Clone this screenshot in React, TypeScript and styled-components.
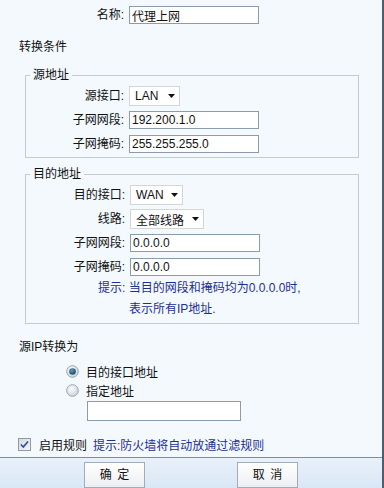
import React from "react";
import styled, { createGlobalStyle } from "styled-components";

const Global = createGlobalStyle`
  html, body { margin: 0; padding: 0; background: #f4f9fe; }
  body { font-family: "Liberation Sans", "Noto Sans CJK SC", sans-serif; font-size: 12px; color: #111; }
  * { box-sizing: border-box; }
`;

const Page = styled.div`
  width: 384px;
  height: 488px;
  overflow: hidden;
  background: #f4f9fe;
  border-right: 2px solid #4e5e6e;
  display: flex;
  flex-direction: column;
`;

const Row = styled.div<{ $mt?: number }>`
  display: flex;
  align-items: center;
  height: 20px;
  margin-top: ${(p) => p.$mt ?? 0}px;
`;

const Label = styled.span<{ $w: number; $gap?: number }>`
  width: ${(p) => p.$w}px;
  margin-right: ${(p) => p.$gap ?? 5}px;
  text-align: right;
  white-space: nowrap;
  line-height: 20px;
`;

const TextInput = styled.input<{ $w?: number; $h?: number }>`
  width: ${(p) => p.$w ?? 130}px;
  height: ${(p) => p.$h ?? 18}px;
  border: 1px solid #8d9cad;
  background: #fff;
  padding: 0 2px;
  margin: 0;
  font-family: "Liberation Sans", "Noto Sans CJK SC", sans-serif;
  font-size: 12px;
  color: #111;
  outline: none;
`;

const SelectBox = styled.div<{ $w: number }>`
  width: ${(p) => p.$w}px;
  height: 20px;
  border: 1px solid #d2d6da;
  background: #fff;
  display: flex;
  align-items: center;
  justify-content: space-between;
  padding: 0 4px 0 5px;
  font-size: 12px;
  color: #111;
`;

const Arrow = styled.svg`
  width: 7px;
  height: 4px;
  flex: none;
`;

const SectionTitle = styled.div<{ $mt: number }>`
  margin-top: ${(p) => p.$mt}px;
  height: 20px;
  line-height: 20px;
  padding-left: 19px;
`;

const Group = styled.fieldset<{ $mt: number }>`
  margin: ${(p) => p.$mt}px 0 0 25px;
  width: 334px;
  padding: 0 0 3px 0;
  border: 1px solid #c3ccd4;
  min-inline-size: 0;
`;

const Legend = styled.legend`
  margin-left: 4px;
  padding: 0 3px;
  height: 16px;
  line-height: 16px;
  font-size: 12px;
`;

const Rows = styled.div<{ $mt: number }>`
  display: flex;
  flex-direction: column;
  gap: 4px;
  margin-top: ${(p) => p.$mt}px;
`;

const Hint = styled.div`
  display: flex;
  flex-direction: column;
  color: #1c2f94;
  margin-top: 1px;
`;

const HintLine = styled.div<{ $indent: number }>`
  height: 21px;
  line-height: 21px;
  padding-left: ${(p) => p.$indent}px;
  white-space: nowrap;
`;

const RadioRow = styled.label<{ $mt?: number }>`
  display: flex;
  align-items: center;
  height: 19px;
  padding-left: 66px;
  margin-top: ${(p) => p.$mt ?? 0}px;
  gap: 7px;
`;

const IndentInput = styled.div`
  padding-left: 87px;
  margin-top: 1px;
  display: flex;
`;

const CheckRow = styled.div`
  display: flex;
  align-items: center;
  height: 20px;
  margin-top: 13px;
  padding-left: 18px;
`;

const BlueNote = styled.span`
  color: #1c2f94;
  margin-left: 6px;
`;

const Footer = styled.div`
  margin-top: 3px;
  flex: 1;
  border-top: 1px solid #7f8c99;
  background: linear-gradient(#e9f1fa, #d9e7f5);
  display: flex;
  padding: 4px 0 0 84px;
  gap: 92px;
`;

const Button = styled.button`
  width: 61px;
  height: 26px;
  margin: 0;
  padding: 0 0 3px 0;
  border: 1px solid #a3acb6;
  background: linear-gradient(#ffffff, #eceff2);
  font-family: "Liberation Sans", "Noto Sans CJK SC", sans-serif;
  font-size: 12px;
  color: #111;
  letter-spacing: 0;
  word-spacing: 2px;
`;

const Select = ({ value, w }: { value: string; w: number }) => (
  <SelectBox $w={w}>
    <span>{value}</span>
    <Arrow viewBox="0 0 7 4">
      <path d="M0 0 H7 L3.5 4 Z" fill="#111" />
    </Arrow>
  </SelectBox>
);

const Radio = ({ checked }: { checked?: boolean }) => (
  <svg width="13" height="13" viewBox="0 0 13 13">
    <defs>
      <radialGradient id={checked ? "rg1" : "rg0"} cx="0.4" cy="0.35" r="0.7">
        <stop offset="0" stopColor="#ffffff" />
        <stop offset="1" stopColor="#c9d0d6" />
      </radialGradient>
      <radialGradient id="dot" cx="0.4" cy="0.35" r="0.7">
        <stop offset="0" stopColor="#5f9ac0" />
        <stop offset="1" stopColor="#163f5e" />
      </radialGradient>
    </defs>
    <circle cx="6.5" cy="6.5" r="5.8" fill={`url(#${checked ? "rg1" : "rg0"})`} stroke="#9aa5af" strokeWidth="1" />
    {checked && <circle cx="6.5" cy="6.5" r="3.3" fill="url(#dot)" />}
  </svg>
);

const Checkbox = () => (
  <svg width="13" height="13" viewBox="0 0 13 13">
    <defs>
      <linearGradient id="cb" x1="0" y1="0" x2="1" y2="1">
        <stop offset="0" stopColor="#d4d9de" />
        <stop offset="1" stopColor="#f4f6f8" />
      </linearGradient>
    </defs>
    <rect x="0.5" y="0.5" width="12" height="12" fill="url(#cb)" stroke="#8e9aa6" />
    <path d="M3 6.5 L5.3 9 L10 3.5" fill="none" stroke="#2b4c9a" strokeWidth="1.6" />
  </svg>
);

export default function App() {
  return (
    <>
      <Global />
      <Page>
        <Row $mt={5}>
          <Label $w={124}>名称:</Label>
          <TextInput defaultValue="代理上网" />
        </Row>

        <SectionTitle $mt={12}>转换条件</SectionTitle>

        <Group $mt={10}>
          <Legend>源地址</Legend>
          <Rows $mt={3}>
            <Row>
              <Label $w={98}>源接口:</Label>
              <Select value="LAN" w={51} />
            </Row>
            <Row>
              <Label $w={98}>子网网段:</Label>
              <TextInput defaultValue="192.200.1.0" />
            </Row>
            <Row>
              <Label $w={98}>子网掩码:</Label>
              <TextInput defaultValue="255.255.255.0" />
            </Row>
          </Rows>
        </Group>

        <Group $mt={8}>
          <Legend>目的地址</Legend>
          <Rows $mt={3}>
            <Row>
              <Label $w={99}>目的接口:</Label>
              <Select value="WAN" w={53} />
            </Row>
            <Row>
              <Label $w={99}>线路:</Label>
              <Select value="全部线路" w={74} />
            </Row>
            <Row>
              <Label $w={99}>子网网段:</Label>
              <TextInput defaultValue="0.0.0.0" />
            </Row>
            <Row>
              <Label $w={99}>子网掩码:</Label>
              <TextInput defaultValue="0.0.0.0" />
            </Row>
          </Rows>
          <Hint>
            <HintLine $indent={72}>提示: 当目的网段和掩码均为0.0.0.0时,</HintLine>
            <HintLine $indent={103}>表示所有IP地址.</HintLine>
          </Hint>
        </Group>

        <SectionTitle $mt={13}>源IP转换为</SectionTitle>

        <RadioRow $mt={5}>
          <Radio checked />
          <span>目的接口地址</span>
        </RadioRow>
        <RadioRow>
          <Radio />
          <span>指定地址</span>
        </RadioRow>
        <IndentInput>
          <TextInput $w={154} $h={20} />
        </IndentInput>

        <CheckRow>
          <Checkbox />
          <span style={{ marginLeft: 8 }}>启用规则</span>
          <BlueNote>提示:防火墙将自动放通过滤规则</BlueNote>
        </CheckRow>

        <Footer>
          <Button>确 定</Button>
          <Button>取 消</Button>
        </Footer>
      </Page>
    </>
  );
}
